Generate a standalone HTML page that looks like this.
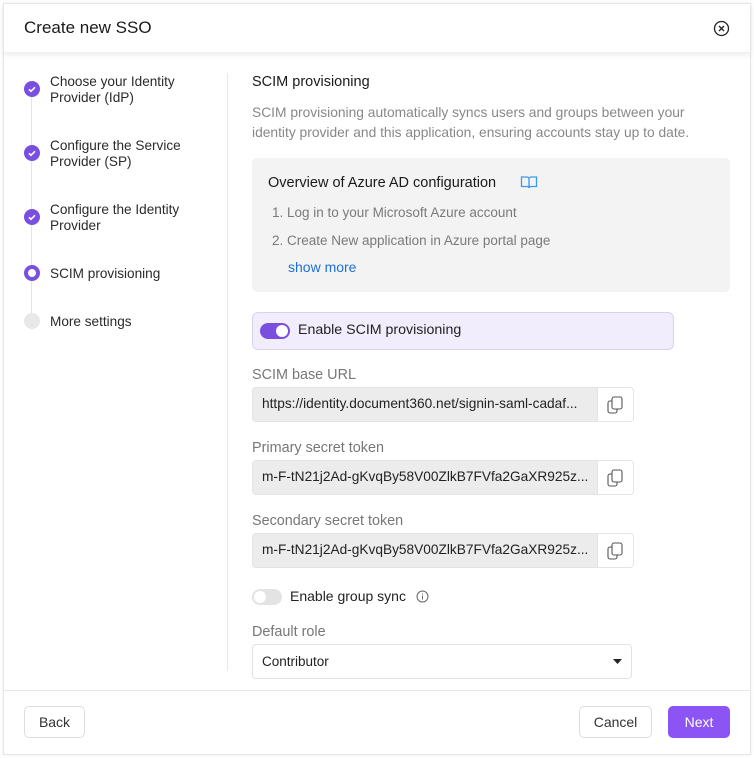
<!DOCTYPE html>
<html><head><style>
*{box-sizing:border-box;margin:0;padding:0}
body{width:754px;height:758px;background:#fff;font-family:"Liberation Sans",sans-serif;position:relative;overflow:hidden;color:#222}
.a{position:absolute;white-space:nowrap}
.dlg{position:absolute;left:3px;top:3px;width:748px;height:752px;border:1px solid #e6e6e6;box-shadow:0 0 3px rgba(0,0,0,.08)}
.hdr{position:absolute;left:3px;top:3px;width:748px;height:50px;box-shadow:0 3px 5px rgba(0,0,0,.06);border-bottom:1px solid #efefef}
.step{position:absolute;left:50px;font-size:13.6px;line-height:16px;color:#2a2a2a}
.dot{position:absolute;left:24px;width:16px;height:16px;border-radius:50%;background:#7a4fe0}
.lbl{font-size:14.4px;color:#777}
.inp{position:absolute;left:252px;width:382px;height:35px;border:1px solid #e4e4e4;border-radius:4px;background:#ececec;overflow:hidden}
.inp span{position:absolute;left:9px;top:8px;font-size:13.7px;color:#222}
.inp .cp{position:absolute;right:0;top:0;width:36px;height:33px;background:#fff;border-left:1px solid #e4e4e4}
.btn{position:absolute;height:32px;border:1px solid #ddd;border-radius:5px;font-size:14px;color:#333;text-align:center;line-height:30px;background:#fff}
</style></head><body>
<div class="dlg"></div>
<div class="hdr"></div>
<div class="a" style="left:24px;top:18px;font-size:17px;color:#1a1a1a">Create new SSO</div>
<svg class="a" style="left:713px;top:20px" width="17" height="17" viewBox="0 0 17 17"><circle cx="8.5" cy="8.5" r="7" fill="none" stroke="#222" stroke-width="1.3"/><path d="M6 6l5 5M11 6l-5 5" stroke="#222" stroke-width="1.3"/></svg>

<div class="a" style="left:31px;top:90px;width:1px;height:230px;background:#e4e4e4"></div>
<div class="dot" style="top:81px"></div><div class="dot" style="top:145px"></div><div class="dot" style="top:209px"></div>
<svg class="a" style="left:24px;top:81px" width="16" height="16"><path d="M5 8.3l2 2 4-4" stroke="#fff" stroke-width="1.6" fill="none"/></svg>
<svg class="a" style="left:24px;top:145px" width="16" height="16"><path d="M5 8.3l2 2 4-4" stroke="#fff" stroke-width="1.6" fill="none"/></svg>
<svg class="a" style="left:24px;top:209px" width="16" height="16"><path d="M5 8.3l2 2 4-4" stroke="#fff" stroke-width="1.6" fill="none"/></svg>
<div class="a" style="left:24px;top:265px;width:16px;height:16px;border-radius:50%;border:4px solid #7a4fe0;background:#fff"></div>
<div class="a" style="left:24px;top:313px;width:16px;height:16px;border-radius:50%;background:#e8e8ea"></div>
<div class="step" style="top:74px">Choose your Identity<br>Provider (IdP)</div>
<div class="step" style="top:138px">Configure the Service<br>Provider (SP)</div>
<div class="step" style="top:202px">Configure the Identity<br>Provider</div>
<div class="step" style="top:266px">SCIM provisioning</div>
<div class="step" style="top:314px">More settings</div>

<div class="a" style="left:227px;top:73px;width:1px;height:598px;background:#e8e8e8"></div>

<div class="a" style="left:252px;top:74px;font-size:14.5px;color:#1a1a1a">SCIM provisioning</div>
<div class="a" style="left:252px;top:103px;font-size:13.8px;line-height:20px;color:#888">SCIM provisioning automatically syncs users and groups between your<br>identity provider and this application, ensuring accounts stay up to date.</div>

<div class="a" style="left:252px;top:158px;width:478px;height:134px;background:#f3f3f3;border-radius:5px"></div>
<div class="a" style="left:268px;top:175px;font-size:14.5px;color:#1a1a1a">Overview of Azure AD configuration</div>
<svg class="a" style="left:520px;top:175px" width="18" height="15" viewBox="0 0 18 15"><path d="M1.5 2h5.5a2 2 0 0 1 2 2v9a2 2 0 0 0-2-1.5H1.5zM16.5 2h-5.5a2 2 0 0 0-2 2v9a2 2 0 0 1 2-1.5h5.5z" fill="none" stroke="#3b9ae8" stroke-width="1.3"/></svg>
<div class="a" style="left:272px;top:205px;font-size:13.5px;color:#7a7a7a">1. Log in to your Microsoft Azure account</div>
<div class="a" style="left:272px;top:233px;font-size:13.5px;color:#7a7a7a">2. Create New application in Azure portal page</div>
<div class="a" style="left:288px;top:259px;font-size:14px;color:#1f6fd8">show more</div>

<div class="a" style="left:252px;top:312px;width:422px;height:38px;background:#f1edfc;border:1px solid #d9d3ea;border-radius:6px"></div>
<div class="a" style="left:260px;top:323px;width:30px;height:16px;border-radius:8px;background:#7a4fe0"></div>
<div class="a" style="left:276px;top:325px;width:12px;height:12px;border-radius:50%;background:#fff"></div>
<div class="a" style="left:298px;top:322px;font-size:14.2px;color:#222">Enable SCIM provisioning</div>

<div class="a lbl" style="left:252px;top:367px">SCIM base URL</div>
<div class="inp" style="top:387px"><span>https://identity.document360.net/signin-saml-cadaf...</span><div class="cp"></div></div>
<div class="a lbl" style="left:252px;top:440px">Primary secret token</div>
<div class="inp" style="top:460px"><span>m-F-tN21j2Ad-gKvqBy58V00ZlkB7FVfa2GaXR925z...</span><div class="cp"></div></div>
<div class="a lbl" style="left:252px;top:513px">Secondary secret token</div>
<div class="inp" style="top:533px"><span>m-F-tN21j2Ad-gKvqBy58V00ZlkB7FVfa2GaXR925z...</span><div class="cp"></div></div>
<svg class="a" style="left:605px;top:395px" width="20" height="20" viewBox="0 0 20 20"><rect x="7" y="2" width="10" height="12" rx="2" fill="none" stroke="#555" stroke-width="1.1"/><path d="M7 6H5a2 2 0 0 0-2 2v8a2 2 0 0 0 2 2h5a2 2 0 0 0 2-2v-2" fill="none" stroke="#555" stroke-width="1.1"/></svg>
<svg class="a" style="left:605px;top:468px" width="20" height="20" viewBox="0 0 20 20"><rect x="7" y="2" width="10" height="12" rx="2" fill="none" stroke="#555" stroke-width="1.1"/><path d="M7 6H5a2 2 0 0 0-2 2v8a2 2 0 0 0 2 2h5a2 2 0 0 0 2-2v-2" fill="none" stroke="#555" stroke-width="1.1"/></svg>
<svg class="a" style="left:605px;top:541px" width="20" height="20" viewBox="0 0 20 20"><rect x="7" y="2" width="10" height="12" rx="2" fill="none" stroke="#555" stroke-width="1.1"/><path d="M7 6H5a2 2 0 0 0-2 2v8a2 2 0 0 0 2 2h5a2 2 0 0 0 2-2v-2" fill="none" stroke="#555" stroke-width="1.1"/></svg>

<div class="a" style="left:252px;top:589px;width:30px;height:16px;border-radius:8px;background:#e3e3e3"></div>
<div class="a" style="left:254px;top:591px;width:12px;height:12px;border-radius:50%;background:#fff"></div>
<div class="a" style="left:290px;top:588px;font-size:14px;color:#222">Enable group sync</div>
<svg class="a" style="left:416px;top:590px" width="13" height="13" viewBox="0 0 13 13"><circle cx="6.5" cy="6.5" r="5.5" fill="none" stroke="#666"/><path d="M6.5 5.5v4M6.5 3.5v1" stroke="#666"/></svg>

<div class="a lbl" style="left:252px;top:624px">Default role</div>
<div class="a" style="left:252px;top:644px;width:380px;height:35px;border:1px solid #e2e2e2;border-radius:4px;background:#fff"></div>
<div class="a" style="left:262px;top:654px;font-size:13.5px;color:#222">Contributor</div>
<svg class="a" style="left:613px;top:659px" width="9" height="6"><path d="M0 0h9L4.5 5z" fill="#222"/></svg>

<div class="a" style="left:4px;top:690px;width:746px;height:1px;background:#e8e8e8"></div>
<div class="btn" style="left:24px;top:706px;width:61px">Back</div>
<div class="btn" style="left:579px;top:706px;width:73px">Cancel</div>
<div class="btn" style="left:668px;top:706px;width:62px;background:#8c54f5;border-color:#8c54f5;color:#fff">Next</div>
</body></html>
